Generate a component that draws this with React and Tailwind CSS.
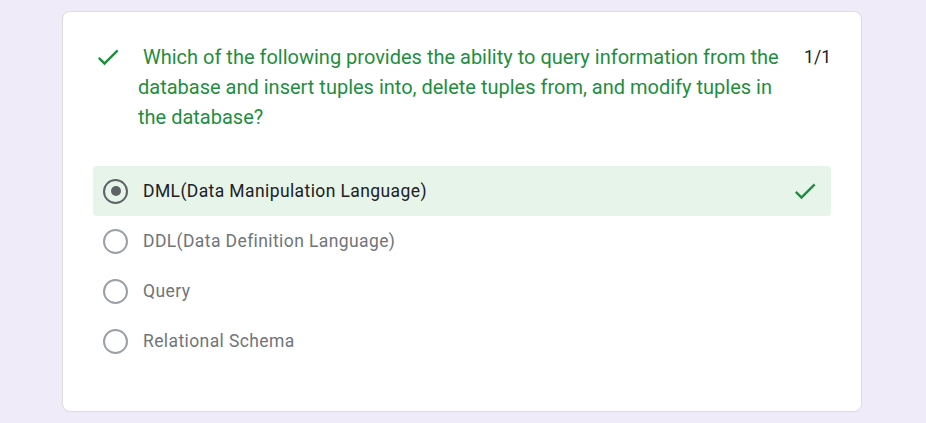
import React from 'react';

const options = [
    { label: 'DML(Data Manipulation Language)', selected: true },
    { label: 'DDL(Data Definition Language)' },
    { label: 'Query' },
    { label: 'Relational Schema' },
];

const Check = ({ className }) => (
    <svg viewBox="0 0 24 24" className={className} fill="currentColor">
        <path d="M9 16.17L4.83 12l-1.42 1.41L9 19 21 7l-1.41-1.41z" />
    </svg>
);

const Radio = ({ selected }) => (
    <div
        className={`w-[25px] h-[25px] rounded-full border-[2.5px] flex items-center justify-center shrink-0 ${
            selected ? 'border-[#5f6368]' : 'border-[#9aa0a6]'
        }`}
    >
        {selected && <div className="w-[10px] h-[10px] rounded-full bg-[#5f6368]" />}
    </div>
);

export default function App() {
    return (
        <div className="min-h-[423px] bg-[#f0ebf8] pt-[11px] px-[62px] font-['Roboto',sans-serif]">
            <div className="w-[800px] h-[401px] bg-white border border-[#dadce0] rounded-[8px] pt-[30px] px-[30px]">
                {/* Question header */}
                <div className="flex items-start">
                    <Check className="w-[28px] h-[28px] text-[#1e8e3e] mt-[1px] ml-[1px] shrink-0" />
                    <p className="ml-[16px] flex-1 text-[20px] leading-[30px] text-[#1e8e3e] pr-[20px]">
                        &nbsp;Which of the following provides the ability to query information from the
                        database and insert tuples into, delete tuples from, and modify tuples in
                        the database?
                    </p>
                    <span className="text-[17.5px] leading-[30px] text-[#202124] shrink-0">1/1</span>
                </div>

                {/* Options */}
                <div className="mt-[34px]">
                    {options.map((opt) => (
                        <div
                            key={opt.label}
                            className={`h-[50px] flex items-center pl-[10px] pr-[12px] rounded-[4px] ${
                                opt.selected ? 'bg-[#e6f4ea]' : ''
                            }`}
                        >
                            <Radio selected={opt.selected} />
                            <span
                                className={`ml-[15px] flex-1 text-[17.5px] tracking-[0.4px] pt-[1px] ${
                                    opt.selected ? 'text-[#202124]' : 'text-[#70757a]'
                                }`}
                            >
                                {opt.label}
                            </span>
                            {opt.selected && <Check className="w-[28px] h-[28px] text-[#1e8e3e]" />}
                        </div>
                    ))}
                </div>
            </div>
        </div>
    );
}
